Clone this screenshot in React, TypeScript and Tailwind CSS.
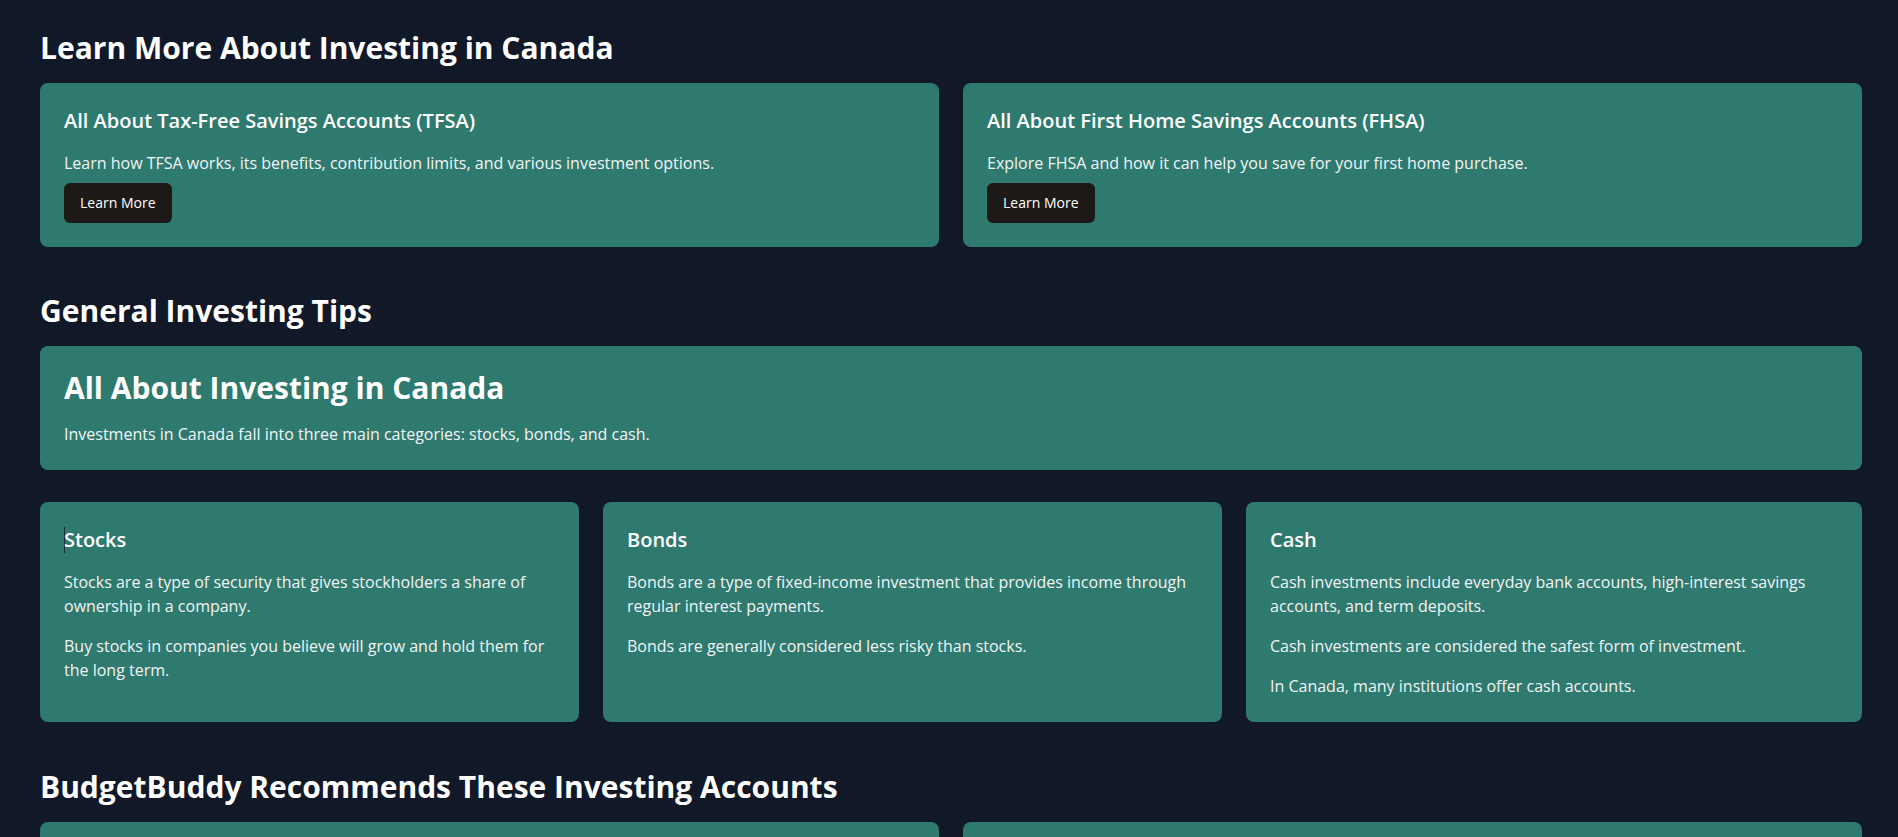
const topCards = [
  {
    title: 'All About Tax-Free Savings Accounts (TFSA)',
    text: 'Learn how TFSA works, its benefits, contribution limits, and various investment options.',
  },
  {
    title: 'All About First Home Savings Accounts (FHSA)',
    text: 'Explore FHSA and how it can help you save for your first home purchase.',
  },
];

const categories = [
  {
    title: 'Stocks',
    caret: true,
    paragraphs: [
      'Stocks are a type of security that gives stockholders a share of ownership in a company.',
      'Buy stocks in companies you believe will grow and hold them for the long term.',
    ],
  },
  {
    title: 'Bonds',
    paragraphs: [
      'Bonds are a type of fixed-income investment that provides income through regular interest payments.',
      'Bonds are generally considered less risky than stocks.',
    ],
  },
  {
    title: 'Cash',
    paragraphs: [
      'Cash investments include everyday bank accounts, high-interest savings accounts, and term deposits.',
      'Cash investments are considered the safest form of investment.',
      'In Canada, many institutions offer cash accounts.',
    ],
  },
];

function SectionHeading({ children }: { children: React.ReactNode }) {
  return <h2 className="mb-[17px] text-3xl leading-9 font-bold text-white">{children}</h2>;
}

export default function App() {
  return (
    <div
      className="min-h-screen bg-[#111827] pt-[30px] pr-9 pl-10 pb-10 text-white"
      style={{ fontFamily: '"Open Sans", "Noto Sans", sans-serif' }}
    >
      <section>
        <SectionHeading>Learn More About Investing in Canada</SectionHeading>
        <div className="grid grid-cols-2 gap-6">
          {topCards.map((card) => (
            <div key={card.title} className="rounded-lg bg-[#2e7a6e] p-6">
              <h3 className="mb-4 text-xl leading-7 font-semibold text-white">{card.title}</h3>
              <p className="text-base leading-6 text-gray-100">{card.text}</p>
              <button className="mt-2 rounded-md bg-[#1c1917] px-4 py-2.5 text-sm leading-5 font-medium text-white">
                Learn More
              </button>
            </div>
          ))}
        </div>
      </section>

      <section className="mt-[46px]">
        <SectionHeading>General Investing Tips</SectionHeading>
        <div className="mb-8 rounded-lg bg-[#2e7a6e] p-6">
          <h3 className="mb-4 text-3xl leading-9 font-bold text-white">All About Investing in Canada</h3>
          <p className="text-base leading-6 text-gray-100">
            Investments in Canada fall into three main categories: stocks, bonds, and cash.
          </p>
        </div>

        <div className="grid grid-cols-[539fr_619fr_616fr] gap-6">
          {categories.map((cat) => (
            <div key={cat.title} className="h-[220px] rounded-lg bg-[#2e7a6e] p-6">
              <h3 className="mb-4 flex items-center text-xl leading-7 font-semibold text-white">
                {cat.caret && <span className="-mr-px h-[26px] w-px bg-[#1f2937]" />}
                {cat.title}
              </h3>
              <div className="space-y-4">
                {cat.paragraphs.map((p) => (
                  <p key={p} className="text-base leading-6 text-gray-100">
                    {p}
                  </p>
                ))}
              </div>
            </div>
          ))}
        </div>
      </section>

      <section className="mt-[47px]">
        <SectionHeading>BudgetBuddy Recommends These Investing Accounts</SectionHeading>
        <div className="grid grid-cols-2 gap-6">
          <div className="h-40 rounded-lg bg-[#2e7a6e]" />
          <div className="h-40 rounded-lg bg-[#2e7a6e]" />
        </div>
      </section>
    </div>
  );
}
